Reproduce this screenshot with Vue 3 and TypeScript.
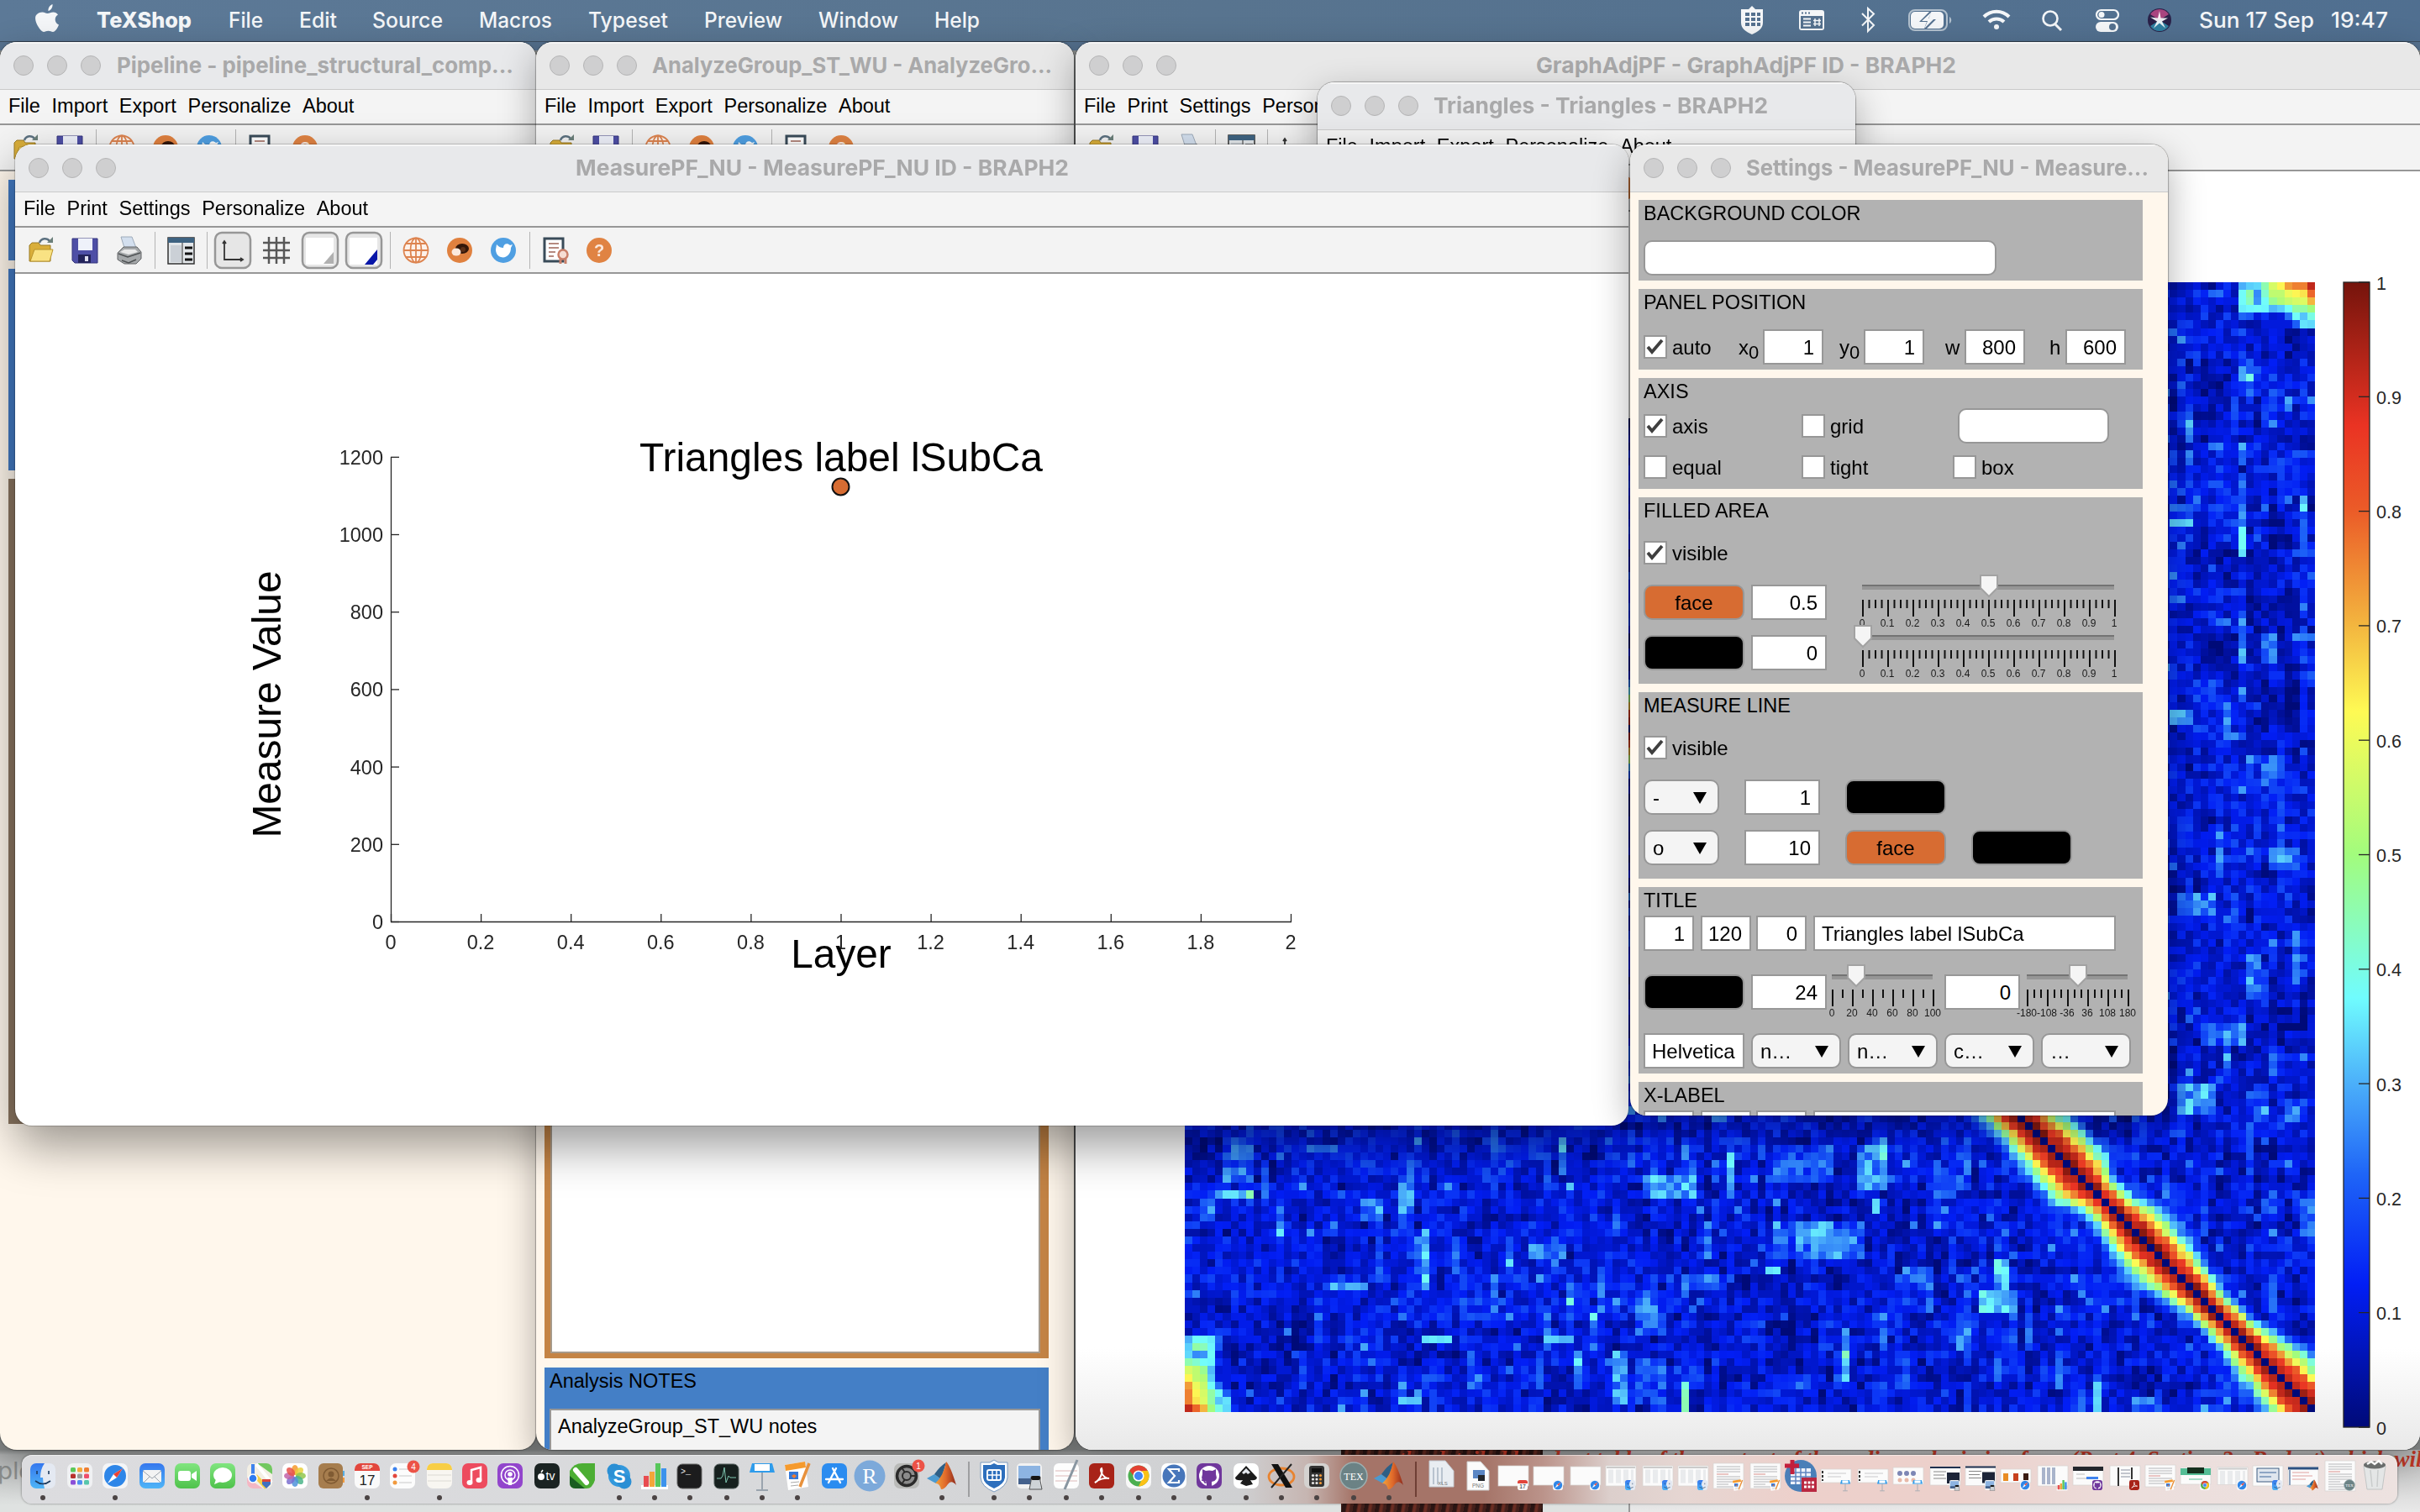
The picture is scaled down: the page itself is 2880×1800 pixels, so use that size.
<script setup lang="ts">
import { onMounted, ref } from 'vue'

interface Txt { t: string; x: number; w: number; bold?: boolean }
interface Item {
  k: 'check' | 'label' | 'field' | 'color' | 'drop' | 'slider'
  w: number
  gap?: number
  v?: string
  sub?: string
  on?: boolean
  left?: boolean
  bg?: string
  pos?: number
  minor?: number
  labels?: string[]
}
interface Row { mt: number; items: Item[] }
interface Panel { title: string; h: number; rows: Row[] }
interface Win {
  id: string; x: number; y: number; w: number; h: number
  title: string; tx: number; tw: number; menus: string[]; tools: string[]
}

const bar: Txt[] = [
  { t: 'TeXShop', x: 115, w: 113, bold: true },
  { t: 'File', x: 272, w: 41 },
  { t: 'Edit', x: 356, w: 45 },
  { t: 'Source', x: 443, w: 84 },
  { t: 'Macros', x: 570, w: 87 },
  { t: 'Typeset', x: 700, w: 95 },
  { t: 'Preview', x: 838, w: 93 },
  { t: 'Window', x: 974, w: 95 },
  { t: 'Help', x: 1112, w: 54 },
  { t: 'Sun 17 Sep', x: 2617, w: 137 },
  { t: '19:47', x: 2774, w: 68 },
]

const ioMenus = ['File', 'Import', 'Export', 'Personalize', 'About']
const plotMenus = ['File', 'Print', 'Settings', 'Personalize', 'About']
const ioTools = ['folder', 'save', '|', 'globe', 'forum', 'bird', '|', 'doc', 'help']
const plotTools = ['folder', 'save', 'print', '|', 'layout', '|', 'axis', 'grid', 'gray', 'blue', '|', 'globe', 'forum', 'bird', '|', 'doc', 'help']

const wins: Win[] = [
  { id: 'pipeline', x: 0, y: 50, w: 638, h: 1676, title: 'Pipeline - pipeline_structural_comp...', tx: 139, tw: 472, menus: ioMenus, tools: ioTools },
  { id: 'analyze', x: 638, y: 50, w: 640, h: 1676, title: 'AnalyzeGroup_ST_WU - AnalyzeGro...', tx: 138, tw: 476, menus: ioMenus, tools: ioTools },
  { id: 'graph', x: 1280, y: 50, w: 1600, h: 1676, title: 'GraphAdjPF - GraphAdjPF ID - BRAPH2', tx: 548, tw: 500, menus: plotMenus, tools: plotTools },
  { id: 'triangles', x: 1568, y: 98, w: 640, h: 400, title: 'Triangles - Triangles - BRAPH2', tx: 138, tw: 398, menus: ioMenus, tools: ioTools },
  { id: 'measure', x: 18, y: 172, w: 1920, h: 1168, title: 'MeasurePF_NU - MeasurePF_NU ID - BRAPH2', tx: 667, tw: 587, menus: plotMenus, tools: plotTools },
  { id: 'settings', x: 1940, y: 172, w: 640, h: 1156, title: 'Settings - MeasurePF_NU - Measure...', tx: 138, tw: 479, menus: [], tools: [] },
]

const ORANGE = '#d76c32'
const unit = ['0', '0.1', '0.2', '0.3', '0.4', '0.5', '0.6', '0.7', '0.8', '0.9', '1']
const panels: Panel[] = [
  { title: 'BACKGROUND COLOR', h: 96, rows: [{ mt: 14, items: [{ k: 'color', w: 420, bg: '#fff' }] }] },
  { title: 'PANEL POSITION', h: 96, rows: [{ mt: 14, items: [
    { k: 'check', w: 113, v: 'auto', on: true },
    { k: 'label', w: 29, v: 'x', sub: '0' }, { k: 'field', w: 72, v: '1' },
    { k: 'label', w: 29, gap: 19, v: 'y', sub: '0' }, { k: 'field', w: 72, v: '1' },
    { k: 'label', w: 23, gap: 25, v: 'w' }, { k: 'field', w: 72, v: '800' },
    { k: 'label', w: 19, gap: 29, v: 'h' }, { k: 'field', w: 72, v: '600' },
  ] }] },
  { title: 'AXIS', h: 132, rows: [
    { mt: 2, items: [{ k: 'check', w: 188, v: 'axis', on: true }, { k: 'check', w: 186, v: 'grid' }, { k: 'color', w: 180, bg: '#fff' }] },
    { mt: 7, items: [{ k: 'check', w: 188, v: 'equal' }, { k: 'check', w: 180, v: 'tight' }, { k: 'check', w: 100, v: 'box' }] },
  ] },
  { title: 'FILLED AREA', h: 222, rows: [
    { mt: 11, items: [{ k: 'check', w: 200, v: 'visible', on: true }] },
    { mt: 17, items: [{ k: 'color', w: 120, bg: ORANGE, v: 'face' }, { k: 'field', w: 90, gap: 8, v: '0.5' }, { k: 'slider', w: 300, gap: 43, pos: 150, minor: 4, labels: unit }] },
    { mt: 18, items: [{ k: 'color', w: 120, bg: '#000' }, { k: 'field', w: 90, gap: 8, v: '0' }, { k: 'slider', w: 300, gap: 43, pos: 0, minor: 4, labels: unit }] },
  ] },
  { title: 'MEASURE LINE', h: 222, rows: [
    { mt: 11, items: [{ k: 'check', w: 200, v: 'visible', on: true }] },
    { mt: 17, items: [{ k: 'drop', w: 90, v: '-' }, { k: 'field', w: 90, gap: 30, v: '1' }, { k: 'color', w: 120, gap: 30, bg: '#000' }] },
    { mt: 18, items: [{ k: 'drop', w: 90, v: 'o' }, { k: 'field', w: 90, gap: 30, v: '10' }, { k: 'color', w: 120, gap: 30, bg: ORANGE, v: 'face' }, { k: 'color', w: 120, gap: 30, bg: '#000' }] },
  ] },
  { title: 'TITLE', h: 222, rows: [
    { mt: 0, items: [{ k: 'field', w: 60, v: '1' }, { k: 'field', w: 60, gap: 8, v: '120' }, { k: 'field', w: 60, gap: 6, v: '0' }, { k: 'field', w: 360, gap: 8, v: 'Triangles label lSubCa', left: true }] },
    { mt: 28, items: [
      { k: 'color', w: 120, bg: '#000' }, { k: 'field', w: 90, gap: 8, v: '24' },
      { k: 'slider', w: 120, gap: 7, pos: 28, minor: 2, labels: ['0', '20', '40', '60', '80', '100'] },
      { k: 'field', w: 90, gap: 13, v: '0' },
      { k: 'slider', w: 120, gap: 9, pos: 60, minor: 3, labels: ['-180', '-108', '-36', '36', '108', '180'] },
    ] },
    { mt: 28, items: [{ k: 'field', w: 120, v: 'Helvetica', left: true }, { k: 'drop', w: 107, gap: 8, v: 'n…' }, { k: 'drop', w: 107, gap: 8, v: 'n…' }, { k: 'drop', w: 107, gap: 8, v: 'c…' }, { k: 'drop', w: 107, gap: 8, v: '…' }] },
  ] },
  { title: 'X-LABEL', h: 222, rows: [
    { mt: 0, items: [{ k: 'field', w: 60 }, { k: 'field', w: 60, gap: 8 }, { k: 'field', w: 60, gap: 6 }, { k: 'field', w: 360, gap: 8 }] },
  ] },
]

function ticks(it: Item): { x: number; big: boolean }[] {
  const n = ((it.labels ?? []).length - 1) * (it.minor ?? 1)
  return Array.from({ length: n + 1 }, (_, i) => ({ x: (i * it.w) / n, big: i % (it.minor ?? 1) === 0 }))
}

const xt = ['0', '0.2', '0.4', '0.6', '0.8', '1', '1.2', '1.4', '1.6', '1.8', '2']
const yt = ['0', '200', '400', '600', '800', '1000', '1200']

/* ---- adjacency matrix ---- */
const N = 148
const canvas = ref<HTMLCanvasElement[] | HTMLCanvasElement | null>(null)
const stops: [number, number[]][] = [
  [0, [0, 10, 120]], [0.125, [2, 30, 245]], [0.22, [30, 100, 247]], [0.3, [75, 175, 250]], [0.375, [112, 252, 254]],
  [0.5, [162, 252, 125]], [0.625, [254, 250, 84]], [0.7, [243, 182, 63]], [0.8, [235, 92, 40]], [0.875, [234, 51, 35]], [1, [117, 20, 12]],
]
function colour(v: number): string {
  const c = Math.max(0, Math.min(1, v))
  for (let i = 1; i < stops.length; i++) {
    if (c <= stops[i][0]) {
      const [a, ca] = stops[i - 1]
      const [b, cb] = stops[i]
      const t = (c - a) / (b - a)
      return `rgb(${ca.map((p, k) => Math.round(p + (cb[k] - p) * t)).join(',')})`
    }
  }
  return 'rgb(117,20,12)'
}
function hash(i: number, j: number, s: number): number {
  let h = Math.imul(i + 1, 374761393) ^ Math.imul(j + 1, 668265263) ^ Math.imul(s + 1, 2147483647 - 5821)
  h = Math.imul(h ^ (h >>> 13), 1274126177)
  h = Math.imul(h ^ (h >>> 15), 2246822519)
  return ((h ^ (h >>> 16)) >>> 0) / 4294967296
}
/* regions with raised correlation: column, row, columns, rows, level */
const patches: number[][] = [
  [5, 112, 4, 6, 0.25], [4, 119, 5, 1, 0.4], [2, 120, 2, 3, 0.28], [16, 113, 4, 1, 0.24], [23, 120, 3, 3, 0.3], [28, 117, 2, 5, 0.3],
  [31, 124, 1, 8, 0.34], [39, 112, 3, 6, 0.2], [45, 126, 5, 2, 0.27], [60, 117, 7, 3, 0.3], [71, 114, 1, 6, 0.4],
  [68, 123, 1, 5, 0.3], [77, 113, 8, 5, 0.24], [88, 113, 3, 6, 0.32], [91, 112, 1, 7, 0.35], [77, 123, 12, 5, 0.27],
  [82, 123, 3, 4, 0.33], [106, 128, 2, 5, 0.36], [104, 132, 5, 3, 0.33], [59, 132, 4, 6, 0.25], [65, 130, 5, 2, 0.3],
  [31, 138, 4, 1, 0.36], [47, 138, 4, 1, 0.32], [56, 140, 2, 7, 0.32], [59, 141, 4, 6, 0.22], [65, 144, 1, 4, 0.43],
  [86, 137, 1, 7, 0.37], [119, 144, 1, 4, 0.33], [124, 146, 3, 2, 0.27], [18, 131, 6, 1, 0.29], [28, 146, 3, 1, 0.33],
  [76, 129, 2, 1, 0.36], [94, 129, 4, 2, 0.25], [99, 112, 4, 7, 0.22], [49, 112, 1, 5, 0.3], [65, 112, 2, 5, 0.23],
  [90, 120, 1, 2, 0.35], [130, 105, 5, 4, 0.33], [144, 107, 3, 3, 0.26], [138, 119, 6, 3, 0.17], [145, 119, 3, 3, 0.22],
  [128, 6, 2, 1, 0.22], [130, 8, 3, 5, 0.15], [138, 11, 1, 2, 0.28], [139, 11, 2, 1, 0.2], [131, 18, 1, 1, 0.33], [131, 19, 1, 2, 0.24],
  [134, 21, 2, 1, 0.24], [138, 21, 1, 1, 0.3], [138, 22, 1, 2, 0.22], [131, 22, 1, 2, 0.25], [138, 30, 1, 1, 0.31], [138, 32, 1, 4, 0.37],
  [146, 28, 1, 2, 0.29], [146, 29, 1, 1, 0.35], [129, 31, 3, 1, 0.33], [129, 29, 3, 1, 0.23], [145, 35, 2, 1, 0.2], [129, 38, 1, 1, 0.25],
  [129, 41, 2, 1, 0.24], [135, 44, 2, 1, 0.24], [138, 43, 1, 7, 0.28], [141, 46, 2, 4, 0.24], [144, 15, 1, 2, 0.28], [147, 15, 1, 1, 0.29],
  [145, 22, 3, 1, 0.19], [134, 1, 2, 1, 0.24], [129, 56, 3, 2, 0.34], [139, 62, 4, 4, 0.24], [135, 71, 1, 7, 0.28], [142, 74, 4, 3, 0.26],
  [130, 80, 5, 3, 0.27], [139, 88, 2, 6, 0.3], [145, 84, 2, 8, 0.24], [133, 97, 6, 3, 0.26],
]
const corner: number[][] = [
  [0.3, 0.33, 0.34, 0.45, 0.57, 0.63, 0.73, 0.76, 0.76, 0.92],
  [0.38, 0.46, 0.26, 0.42, 0.54, 0.54, 0.6, 0.63, 0.65, 0.79],
  [0.38, 0.44, 0.27, 0.38, 0.48, 0.52, 0.55, 0.57, 0.58, 0.7],
  [0.36, 0.37, 0.38, 0.37, 0.31, 0.33, 0.38, 0.46, 0.46, 0.5],
  [0.22, 0.2, 0.1, 0.15, 0.09, 0.1, 0.23, 0.38, 0.32, 0.4],
  [0.06, 0.04, 0.05, 0.1, 0.1, 0.1, 0.1, 0.21, 0.35, 0.34],
]
/* reach of the diagonal band at a given position along it */
const spread: [number, number][] = [[100, 5], [107, 5], [110, 5], [113, 6], [117, 5.6], [119, 3.6], [121, 4], [124, 5.6], [128, 5.6], [131, 4.4], [134, 3.3], [138, 3.8], [141, 5], [144, 6.2], [147, 6.6]]
function width(k: number): number {
  if (k <= 100) return 5
  for (let i = 1; i < spread.length; i++) {
    if (k <= spread[i][0]) {
      const [a, va] = spread[i - 1]
      const [b, vb] = spread[i]
      return va + ((vb - va) * (k - a)) / (b - a)
    }
  }
  return 6.6
}
function cell(r: number, c: number): number {
  if (r === c) return 0
  const fine = hash(r, c, 1)
  const vert = hash(Math.floor(r / 5), c, 2)
  const horz = hash(r, Math.floor(c / 4), 3)
  const blk = hash(Math.floor((r + 2) / 6), Math.floor((c + 1) / 7), 4)
  let v = -0.055 + 0.12 * fine + 0.075 * vert + 0.05 * horz + 0.06 * blk
  if (vert > 0.95) v += 0.07
  if (fine > 0.98) v += 0.09
  for (const [pc, pr, pw, ph, lv] of patches) {
    if (c >= pc && c < pc + pw && r >= pr && r < pr + ph) {
      const many = pw * ph > 4
      v = Math.max(v, lv + (fine - (many ? 0.75 : 0.6)) * (many ? 0.17 : 0.05) + (many ? (vert - 0.5) * 0.08 : 0))
    }
  }
  if (c >= 138 && r < 6) return corner[r][c - 138]
  if (r >= 138 && c < 6) return corner[c][r - 138]
  const d = Math.abs(r - c)
  if (d < 10) {
    const s = width((r + c) / 2) * (0.92 + 0.16 * blk)
    const near = 0.97 * Math.exp(-Math.pow(d / s, 2.2)) + (fine - 0.5) * 0.09
    v = Math.max(v, near)
  }
  return v
}
onMounted(() => {
  const el = Array.isArray(canvas.value) ? canvas.value[0] : canvas.value
  const g = el?.getContext('2d')
  if (!g) return
  for (let r = 0; r < N; r++) {
    for (let c = 0; c < N; c++) {
      g.fillStyle = colour(cell(r, c))
      g.fillRect(c, r, 1, 1)
    }
  }
})
const cb = ['1', '0.9', '0.8', '0.7', '0.6', '0.5', '0.4', '0.3', '0.2', '0.1', '0']
const cbStops = stops.map(([o, c]) => ({ o: 1 - o, c: `rgb(${c.join(',')})` })).reverse()

/* ---- dock ---- */
const running = [51, 137, 437, 523, 737, 779, 821, 865, 907, 949, 1121, 1183, 1225, 1269, 1311, 1355, 1397, 1439, 1483, 1525, 1567, 1611, 1653]
interface Thumb { x: number; b: string; k: string; h?: number }
const thumbs: Thumb[] = [
  { x: 1801, b: 'cal', k: 'blank', h: 24 }, { x: 1843, b: 'safari', k: 'blank', h: 22 }, { x: 1887, b: 'safari', k: 'blank', h: 22 },
  { x: 1929, b: 'finder', k: 'list', h: 24 }, { x: 1973, b: 'finder', k: 'list', h: 24 }, { x: 2015, b: 'finder', k: 'list', h: 24 },
  { x: 2057, b: 'pages', k: 'text', h: 30 }, { x: 2101, b: 'pages', k: 'text', h: 30 },
  { x: 2185, b: 'key', k: 'slide', h: 16 }, { x: 2229, b: 'key', k: 'slide', h: 16 }, { x: 2271, b: 'key', k: 'dots', h: 20 },
  { x: 2315, b: 'prev', k: 'brain', h: 22 }, { x: 2357, b: 'prev', k: 'brain', h: 23 }, { x: 2399, b: 'safari', k: 'warm', h: 16 },
  { x: 2443, b: 'num', k: 'sheet', h: 24 }, { x: 2485, b: 'git', k: 'dark', h: 22 }, { x: 2529, b: 'pdf', k: 'cols', h: 24 },
  { x: 2571, b: 'pages', k: 'text', h: 26 }, { x: 2613, b: 'chrome', k: 'green', h: 20 }, { x: 2657, b: 'safari', k: 'list', h: 21 },
  { x: 2699, b: 'finder', k: 'shot', h: 24 }, { x: 2741, b: 'mat', k: 'code', h: 22 }, { x: 2785, b: 'tex', k: 'text', h: 36 },
]
</script>

<template>
  <div class="desk">
    <div class="wall">
      <span class="ghost">rple</span>
      <div class="sheet"></div>
      <div class="photo"></div>
      <span class="redtext">the detailed handout table of the content of the coding submission from (Part 4, Section 2 - Budget) which will</span>
    </div>

    <svg class="menubar" width="2880" height="49">
      <g fill="#f4f6f8">
        <path d="M64 12.500c-.5-3.500 2-7 5-8 .5 3.500-2 7.500-5 8zM57 14c2.500 0 3.800 1.500 6 1.500S67 14 70 14c2.200 0 4.200 1.100 5.500 3-5 3-4 10 1 12-1.500 4-4.300 8.500-7 8.500-2 0-3-1.200-5.500-1.200S60.500 37.500 58.500 37.500C54.500 37.500 45 22 50 17c1.700-2 4-3 7-3z" transform="translate(-6.500 .5)" />
        <text v-for="b in bar" :key="b.t" :x="b.x" y="33" :textLength="b.w" lengthAdjust="spacingAndGlyphs" :class="['bt', { bold: b.bold }]">{{ b.t }}</text>
        <path d="M2085 7l4 4h9v16c0 7-6 11-13 14-7-3-13-7-13-14V11h9z" />
        <rect x="2141" y="12" width="30" height="24" rx="3" />
        <rect x="2495" y="12" width="26" height="11" rx="5.500" fill="none" stroke="#f4f6f8" stroke-width="2.200" />
        <circle cx="2501" cy="17.500" r="3.500" />
        <path d="M2500 26h15a6 6 0 010 12h-15a6 6 0 010-12z" />
        <rect x="2274" y="14" width="39" height="20" rx="5" />
        <path d="M2320 20c3 2 3 6 0 8z" opacity=".6" />
        <circle cx="2376" cy="32" r="3" />
      </g>
      <g fill="#55718f">
        <rect x="2077" y="15" width="5" height="4" /><rect x="2084" y="15" width="5" height="4" /><rect x="2091" y="15" width="4" height="4" />
        <rect x="2077" y="21" width="5" height="4" /><rect x="2084" y="21" width="5" height="4" /><rect x="2091" y="21" width="4" height="4" />
        <rect x="2077" y="27" width="5" height="4" /><rect x="2084" y="27" width="5" height="4" /><rect x="2091" y="27" width="4" height="4" />
        <rect x="2143" y="19" width="26" height="15" />
        <circle cx="2514" cy="32" r="4" />
        <path d="M2300 10l-16 16h9l-5 13 16-16h-9z" />
        <rect x="2144" y="14.500" width="2" height="2" /><rect x="2148" y="14.500" width="2" height="2" /><rect x="2152" y="14.500" width="2" height="2" />
      </g>
      <g stroke="#f4f6f8" fill="none">
        <path d="M2146 22.500h9M2146 26.500h9M2146 30.500h9" stroke-width="2" />
        <path d="M2160 22v9M2165 22v9M2158 24.500h9M2158 28.500h9" stroke-width="1.500" />
        <path d="M2216 16l14 14-7 7V10l7 6.500-14 14" stroke-width="2" />
        <rect x="2272" y="12" width="45" height="24" rx="7" stroke-width="2" opacity=".6" />
        <path d="M2299 14l-12 11h7l-4 9 12-12h-7z" stroke="none" fill="#f4f6f8" />
        <path d="M2361 20a21 21 0 0130 0M2367 26a13 13 0 0118 0" stroke-width="4" />
        <circle cx="2440" cy="22" r="8.500" stroke-width="2.600" />
        <path d="M2446 29l7 7" stroke-width="3" />
      </g>
      <circle cx="2570" cy="24" r="14" fill="#2a2148" />
      <path d="M2559 17a13 13 0 0122 0l-11 7z" fill="#a9457f" />
      <path d="M2559 31a13 13 0 0022 0l-11-7z" fill="#2f7fa0" />
      <path d="M2570 13l1.500 8.500 8.500 0-7 4 4 8-7-6-7 6 4-8-8-5 9 1z" fill="#fff" opacity=".9" />
    </svg>

    <section v-for="w in wins" :key="w.id" :class="['win', w.id]" :style="{ left: w.x + 'px', top: w.y + 'px', width: w.w + 'px', height: w.h + 'px' }">
      <svg class="titlebar" :width="w.w" height="56">
        <circle v-for="i in 3" :key="i" :cx="i * 40 - 12" cy="28" r="11.500" fill="#cfcfd0" stroke="#b4b4b5" />
        <text :x="w.tx" y="36.500" :textLength="w.tw" lengthAdjust="spacingAndGlyphs">{{ w.title }}</text>
      </svg>
      <nav v-if="w.menus.length" class="menus"><span v-for="m in w.menus" :key="m">{{ m }}</span></nav>
      <div v-if="w.tools.length" class="tools">
        <template v-for="(t, i) in w.tools" :key="i">
          <i v-if="t === '|'" class="sep"></i>
          <svg v-else viewBox="-26 -26 52 52" width="52" height="52">
            <rect v-if="w.id === 'measure' && ['axis', 'gray', 'blue'].includes(t)" x="-21" y="-21" width="42" height="42" rx="8" fill="#e6e6e6" stroke="#979797" stroke-width="2.500" />
            <g v-if="t === 'folder'">
              <path d="M-14-6l3-3h8l2 3h12v19h-25z" fill="#d9ae3a" stroke="#9a7a25" />
              <path d="M-13 13l5-14h22l-4 14z" fill="#f9e283" stroke="#b8932c" />
              <path d="M-2-9c2-6 9-6 12-2" fill="none" stroke="#5c7180" stroke-width="2.500" /><path d="M7-9h7v-7z" fill="#6b7f7a" />
            </g>
            <g v-else-if="t === 'save'">
              <path d="M-15-14h30v29h-27l-3-3z" fill="#4e4fa6" stroke="#35357c" /><rect x="-8" y="-14" width="17" height="14" fill="#eef1fa" />
              <rect x="-8" y="5" width="15" height="10" fill="#23235a" /><rect x="0" y="7" width="4" height="6" fill="#dde" />
            </g>
            <g v-else-if="t === 'print'">
              <path d="M-9-16h13l5 13h-14z" fill="#d3dfee" stroke="#9eabba" /><path d="M-13 3l7-7h16l5 6v8l-6 6h-14l-8-5z" fill="#a5a8aa" stroke="#626567" />
              <path d="M-12 4l11 4 15-5M-8 12l8 3 9-4" stroke="#4f5254" fill="none" stroke-width="1.500" /><path d="M-5-1h13l3 3-11 3-10-3z" fill="#e8e8e8" />
            </g>
            <g v-else-if="t === 'layout'">
              <rect x="-15" y="-15" width="31" height="31" fill="#e3e7ea" stroke="#333" stroke-width="1.500" /><rect x="-15" y="-15" width="31" height="6" fill="#3e6381" />
              <rect x="-12" y="-6" width="13" height="20" fill="#cbd0d6" /><path d="M5-3h9M5 4h9M5 11h9" stroke="#111" stroke-width="3" /><path d="M2-9v25" stroke="#333" />
            </g>
            <g v-else-if="t === 'axis'" fill="none" stroke="#333"><path d="M-10-10v21h21M-12-8l2-3 2 3M9 9l3 2-3 2" stroke-width="1.800" /></g>
            <g v-else-if="t === 'grid'" fill="none" stroke="#585858"><path d="M-9-16v32M0-16v32M9-16v32M-16-9h32M-16 0h32M-16 9h32" stroke-width="2.500" /></g>
            <g v-else-if="t === 'gray'"><rect x="-17" y="-15" width="33" height="32" fill="#fff" /><path d="M16 2v14H4z" fill="#b0b0b0" /></g>
            <g v-else-if="t === 'blue'"><rect x="-17" y="-15" width="33" height="32" fill="#fff" /><path d="M16-1v12l-5 6H1z" fill="#0716a8" /></g>
            <g v-else-if="t === 'globe'" fill="none" stroke="#dd8450" stroke-width="1.800">
              <circle r="14.500" fill="#fdf1e9" /><ellipse rx="6.500" ry="14.500" /><path d="M0-15v30M-15 0h30M-12-8h24M-12 8h24" />
            </g>
            <g v-else-if="t === 'forum'"><circle r="15" fill="#e0813f" /><ellipse cx="3" cy="-2" rx="8" ry="6" fill="#33170a" /><ellipse cx="-4" cy="2" rx="5.500" ry="4.500" fill="#fbe9dd" /><circle cx="4" cy="-1" r="3" fill="#5c3018" /></g>
            <g v-else-if="t === 'bird'"><circle r="15" fill="#4f9fe2" /><path d="M-8-7c3 3 5 4 8 4 0-5 5-6 8-3l3-1-2 4c0 8-6 13-12 11-4-1-6-5-6-9z" fill="#fff" /></g>
            <g v-else-if="t === 'doc'">
              <rect x="-13" y="-14" width="22" height="27" fill="#fff" stroke="#394b59" stroke-width="3" /><path d="M-8-8h12M-8-3h12M-8 2h8M-8 7h6" stroke="#b58a80" stroke-width="2" />
              <circle cx="9" cy="5" r="5.500" fill="#f6ddd3" stroke="#c97f69" stroke-width="2.500" /><path d="M6 10v6M12 10v6" stroke="#c97f69" stroke-width="3" />
            </g>
            <g v-else-if="t === 'help'"><circle r="15" fill="#e08343" /><text y="7" text-anchor="middle" font-size="20" font-weight="bold" fill="#fbe8dc">?</text></g>
          </svg>
        </template>
      </div>

      <div v-if="w.id === 'pipeline'" class="pipebody"><div class="b1"></div><div class="b2"></div><div class="b3"></div></div>

      <div v-else-if="w.id === 'analyze'" class="anabody">
        <div class="orangebox"><div></div></div>
        <div class="notes"><p>Analysis NOTES</p><div>AnalyzeGroup_ST_WU notes</div></div>
      </div>

      <div v-else-if="w.id === 'graph'" class="graphbody">
        <canvas ref="canvas" width="148" height="148"></canvas>
        <svg class="cbar" width="100" height="1400" viewBox="0 -10 100 1400">
          <defs><linearGradient id="jet" x1="0" y1="0" x2="0" y2="1"><stop v-for="s in cbStops" :key="s.o" :offset="s.o" :stop-color="s.c" /></linearGradient></defs>
          <rect x="1" y="0" width="31" height="1363" fill="url(#jet)" stroke="#262626" stroke-width="1.300" />
          <g v-for="(l, i) in cb" :key="l">
            <path :d="`M19 ${i * 136.3}h13`" stroke="#262626" stroke-width="1.300" />
            <text x="40" :y="i * 136.3 + 8.500" font-size="21.500" fill="#262626">{{ l }}</text>
          </g>
        </svg>
      </div>

      <svg v-else-if="w.id === 'measure'" class="plot" width="1920" height="1014" viewBox="18 326 1920 1014">
        <path d="M465.500 544V1097.500H1537" fill="none" stroke="#262626" stroke-width="1.300" />
        <g v-for="(l, i) in yt" :key="'y' + l">
          <path :d="`M465 ${1097.5 - i * 92.2}h10`" stroke="#262626" stroke-width="1.300" />
          <text x="456" :y="1106 - i * 92.200" text-anchor="end" class="tick">{{ l }}</text>
        </g>
        <g v-for="(l, i) in xt" :key="'x' + l">
          <path :d="`M${465.5 + i * 107.1} 1097v-9`" stroke="#262626" stroke-width="1.300" />
          <text :x="465 + i * 107.100" y="1130" text-anchor="middle" class="tick">{{ l }}</text>
        </g>
        <text x="1001" y="561" text-anchor="middle" textLength="480" lengthAdjust="spacingAndGlyphs" class="big">Triangles label lSubCa</text>
        <text x="1001" y="1151.500" text-anchor="middle" class="big">Layer</text>
        <text transform="translate(334 838.500) rotate(-90)" text-anchor="middle" class="big">Measure Value</text>
        <circle cx="1000.500" cy="579.500" r="10" fill="#d76c32" stroke="#111" stroke-width="2" />
      </svg>

      <div v-else-if="w.id === 'settings'" class="panels">
        <div v-for="p in panels" :key="p.title" class="panel" :style="{ height: p.h + 'px' }">
          <h4>{{ p.title }}</h4>
          <div v-for="(r, ri) in p.rows" :key="ri" class="row" :style="{ marginTop: r.mt + 'px' }">
            <div v-for="(it, ii) in r.items" :key="ii" :class="['it', it.k, { left: it.left }]" :style="{ width: it.w + 'px', marginLeft: (it.gap ?? 0) + 'px', background: it.bg }">
              <template v-if="it.k === 'check'">
                <svg width="28" height="28" viewBox="0 0 28 28"><rect x="1" y="1" width="26" height="26" fill="#fff" stroke="#979797" stroke-width="2" /><path v-if="it.on" d="M5 14l5 6L22 6" fill="none" stroke="#3f3f3f" stroke-width="3.800" /></svg>
                <span>{{ it.v }}</span>
              </template>
              <template v-else-if="it.k === 'slider'">
                <svg :width="it.w" height="42">
                  <rect x="-1" y="0" :width="it.w" height="6" fill="#969696" /><rect x="-1" y="0" :width="it.w" height="2" fill="#737373" />
                  <path v-for="t in ticks(it)" :key="t.x" :d="`M${t.x} 18v${t.big ? 20 : 10}`" stroke="#111" stroke-width="2" />
                  <text v-for="(l, li) in it.labels" :key="l" :x="(li * it.w) / ((it.labels ?? []).length - 1) - 1" y="50" text-anchor="middle" font-size="12" fill="#1a1a1a">{{ l }}</text>
                  <path :d="`M${(it.pos ?? 0) - 10} -11h20v15l-10 10l-10 -10z`" fill="#f5f5f5" stroke="#a2a2a2" stroke-width="2" />
                </svg>
              </template>
              <template v-else-if="it.k === 'drop'"><span>{{ it.v }}</span><i class="tri"></i></template>
              <template v-else>{{ it.v }}<sub v-if="it.sub">{{ it.sub }}</sub></template>
            </div>
          </div>
        </div>
      </div>
    </section>

    <div class="dock">
      <svg width="2827" height="58" viewBox="26 1732 2827 58">
        <defs>
          <linearGradient id="bl" x1="0" y1="0" x2="0" y2="1"><stop offset="0" stop-color="#3577ee" /><stop offset="1" stop-color="#4fb5f7" /></linearGradient>
          <linearGradient id="gr" x1="0" y1="0" x2="0" y2="1"><stop offset="0" stop-color="#80e57f" /><stop offset="1" stop-color="#4fc24b" /></linearGradient>
          <linearGradient id="mt" x1="0" y1="0" x2="1" y2="0"><stop offset="0" stop-color="#f3a33b" /><stop offset=".5" stop-color="#e0692a" /><stop offset="1" stop-color="#8e2a1c" /></linearGradient>
          <g id="i-finder"><rect x="-15" y="-15" width="30" height="30" rx="7" fill="#e4e9f2" /><path d="M2-15H-8a7 7 0 00-7 7V8a7 7 0 007 7H2Q0 8 0 2h-3Q-3-8 2-15z" fill="url(#bl)" /><path d="M-7-6v4M7-6v4M-9 6q9 7 18 0" stroke="#1c3a5e" stroke-width="1.600" fill="none" /></g>
          <g id="i-safari"><rect x="-15" y="-15" width="30" height="30" rx="7" fill="#f4f5f7" /><circle r="13" fill="#2e86e8" /><path d="M9-9L2 2-9 9-2-2z" fill="#fff" /><path d="M9-9L2 2-2-2z" fill="#ea4335" /></g>
          <g id="i-key"><path d="M-12-15h24l3 11h-30z" fill="#2f9ceb" /><rect x="-9" y="-14" width="18" height="8" fill="#fff" /><path d="M0-4v20M-7 17h14" stroke="#9aa4ae" stroke-width="2" /></g>
          <g id="i-pages"><path d="M-15-13l24-4 4 30-24 4z" fill="#fff" /><path d="M-15-13l24-4 1 7-24 4z" fill="#f59a2d" /><rect x="-10" y="-5" width="11" height="9" fill="#3478d8" /><path d="M-4-2l3 2-3 3-3-3z" fill="#f37b2c" /><path d="M-8 8l10-1M-8 12l9-1" stroke="#aaa" /><path d="M14-15L3 13" stroke="#e8913c" stroke-width="3.500" /></g>
          <g id="i-num"><rect x="-16" y="11" width="32" height="5" fill="#fff" /><rect x="-13" y="0" width="6" height="13" fill="#e84c4f" /><rect x="-6" y="-5" width="6" height="18" fill="#f4a63a" /><rect x="1" y="-15" width="6" height="28" fill="#57c75a" /><rect x="8" y="-9" width="6" height="22" fill="#3c93ec" /></g>
          <g id="i-git"><rect x="-15" y="-15" width="30" height="30" rx="7" fill="#70379c" /><circle r="12" fill="#fff" /><path d="M-8-8l4 2q4-1 8 0l4-2v6q3 8-5 9v5h-6v-5q-8-1-5-9z" fill="#70379c" /><path d="M-9 5q3 0 4 3h3" stroke="#70379c" fill="none" stroke-width="1.500" /></g>
          <g id="i-pdf"><rect x="-15" y="-15" width="30" height="30" rx="6" fill="#a82318" /><path d="M-8 8C-2 5 2-4 0-9c-3 1 1 12 9 12C4 2-4 4-8 8z" fill="none" stroke="#fff" stroke-width="2" /></g>
          <g id="i-chrome"><rect x="-15" y="-15" width="30" height="30" rx="7" fill="#f7f7f7" /><circle r="12.500" fill="#4caf50" /><path d="M-10.800-6.200A12.500 12.500 0 0110.800-6.200L0-5z" fill="#e34133" /><path d="M10.800-6.200A12.500 12.500 0 010 12.500L5 2 4-6z" fill="#fbc116" /><path d="M-10.800-6.200l6.500 8 3-8z" fill="#e34133" /><circle r="5.800" fill="#4285f4" stroke="#fff" stroke-width="1.500" /></g>
          <g id="i-mat"><path d="M-18 3l9-5 8 6-6 5z" fill="#4b9ad0" /><path d="M-9-2Q-2-12 5-16L-1 4z" fill="#2d5f86" /><path d="M5-17Q10-12 17 11 11 4 7 10 3 16-1 16-3 8-8 9 2 0 5-17z" fill="url(#mt)" /></g>
          <g id="i-prev"><rect x="-15" y="-15" width="30" height="30" rx="5" fill="#f2f2f2" /><rect x="-13" y="-12" width="26" height="22" fill="#8db4e2" /><path d="M-13 3h26v7h-26z" fill="#44618c" /><path d="M2 1h11v5l2 10H0l2-10z" fill="#ced3d7" stroke="#555" /><rect x="2" y="0" width="11" height="5" rx="2" fill="#151515" /></g>
          <g id="i-tex"><circle r="16" fill="#6b8285" stroke="#9db0b1" stroke-width="1.500" /><text y="5" text-anchor="middle" class="tex">TEX</text></g>
          <g id="i-cal"><rect x="-15" y="-15" width="30" height="30" rx="7" fill="#fafafa" /><path d="M-15-5v-3a7 7 0 017-7H8a7 7 0 017 7v3z" fill="#e2453c" /><text y="11" text-anchor="middle" font-size="17" fill="#222">17</text></g>
        </defs>

        <use href="#i-finder" x="51" y="1757" />
        <g transform="translate(95 1757)"><rect x="-15" y="-15" width="30" height="30" rx="7" fill="#f0f1f3" /><g v-for="(c, i) in ['#5cc85a', '#f5a93c', '#ef7f33', '#b8312d', '#9b9b9b', '#ef4f6b', '#8b4fd8', '#4f8ff0', '#56c6ac']" :key="i"><rect :x="-11 + (i % 3) * 8" :y="-10 + Math.floor(i / 3) * 7.500" width="6" height="5.500" rx="1.500" :fill="c" /></g></g>
        <use href="#i-safari" x="137" y="1757" />
        <g transform="translate(181 1757)"><rect x="-15" y="-15" width="30" height="30" rx="7" fill="url(#bl)" /><rect x="-11" y="-7" width="22" height="15" rx="2" fill="#f3f3f3" /><path d="M-11-6L0 3 11-6M-10 8l7-7M10 8L3 1" fill="none" stroke="#9aa3ad" /></g>
        <g transform="translate(223 1757)"><rect x="-15" y="-15" width="30" height="30" rx="7" fill="url(#gr)" /><rect x="-11" y="-6" width="15" height="12" rx="3" fill="#fff" /><path d="M5-2l6-4V6L5 2z" fill="#fff" /></g>
        <g transform="translate(265 1757)"><rect x="-15" y="-15" width="30" height="30" rx="7" fill="url(#gr)" /><ellipse cy="-1" rx="11" ry="9" fill="#fff" /><path d="M-8 4l-2 6 7-3z" fill="#fff" /></g>
        <g transform="translate(309 1757)"><rect x="-15" y="-15" width="30" height="30" rx="7" fill="#f3efe4" /><path d="M-3-15H8a7 7 0 017 7v6z" fill="#72c860" /><path d="M-4-14L14 8" stroke="#fff" stroke-width="4" /><path d="M-15 2L4 15h-12a7 7 0 01-7-7z" fill="#f3b7c4" /><path d="M-5 0L8 14" stroke="#f4cf4a" stroke-width="5" /><path d="M-8-14V3" stroke="#3f83ee" stroke-width="4" /><circle cx="-8" cy="3" r="5" fill="#2e7bf0" stroke="#fff" stroke-width="1.500" /><path d="M3 5h10v5l-5 5-5-5z" fill="#3f70c0" /><path d="M3 4h10v3H3z" fill="#d8463d" /></g>
        <g transform="translate(351 1757)"><rect x="-15" y="-15" width="30" height="30" rx="7" fill="#fff" /><ellipse v-for="(c, i) in ['#f59a2c', '#e9d13c', '#92c74c', '#4bb58a', '#4f93da', '#7b6fd0', '#c263a8', '#e8524a']" :key="c" cy="-7" rx="4" ry="6" :fill="c" opacity=".85" :transform="`rotate(${i * 45})`" /></g>
        <g transform="translate(394 1757)"><rect x="12" y="-6" width="4" height="6" fill="#55aee5" /><rect x="12" y="2" width="4" height="6" fill="#f19a3e" /><rect x="-15" y="-15" width="29" height="30" rx="6" fill="#a67d4e" /><circle r="9" fill="none" stroke="#805b33" stroke-width="1.500" /><circle cy="-2" r="3.500" fill="#805b33" /><path d="M-6 6q6-7 12 0z" fill="#805b33" /></g>
        <g transform="translate(437 1757)"><rect x="-15" y="-15" width="30" height="30" rx="7" fill="#fafafa" /><path d="M-15-6v-2a7 7 0 017-7H8a7 7 0 017 7v2z" fill="#e2463d" /><text y="-8" text-anchor="middle" font-size="6.500" font-weight="bold" fill="#fff">SEP</text><text y="11" text-anchor="middle" font-size="17" fill="#222">17</text></g>
        <g transform="translate(479 1757)"><rect x="-15" y="-15" width="30" height="30" rx="7" fill="#fcfcfc" /><path d="M-4-8h15M-4 0h15M-4 8h15" stroke="#c9c9c9" /><circle cx="-9" cy="-8" r="2.500" fill="#3c82ee" /><circle cx="-9" r="2.500" fill="#e2463d" /><circle cx="-9" cy="8" r="2.500" fill="#f19a3e" /><circle cx="13" cy="-11" r="7.500" fill="#ec5347" /><text x="13" y="-7.500" text-anchor="middle" font-size="10" fill="#fff">4</text></g>
        <g transform="translate(523 1757)"><rect x="-15" y="-15" width="30" height="30" rx="7" fill="#f8f6f1" /><path d="M-15-7v-1a7 7 0 017-7H8a7 7 0 017 7v1z" fill="#f8ce45" /><path d="M-14-1h28M-14 6h28" stroke="#dcdad4" /></g>
        <g transform="translate(565 1757)"><rect x="-15" y="-15" width="30" height="30" rx="7" fill="#ed4b5e" /><path d="M-4 7V-7L7-10V4" fill="none" stroke="#fff" stroke-width="2.500" /><ellipse cx="-6" cy="8" rx="3.500" ry="3" fill="#fff" /><ellipse cx="5" cy="5" rx="3.500" ry="3" fill="#fff" /></g>
        <g transform="translate(607 1757)"><rect x="-15" y="-15" width="30" height="30" rx="7" fill="#9245cc" /><circle cy="-1" r="10.500" fill="none" stroke="#fff" stroke-width="1.500" /><circle cy="-1" r="6" fill="none" stroke="#fff" stroke-width="1.500" /><circle cy="-2" r="2.800" fill="#fff" /><path d="M-3 2h6l-1 9h-4z" fill="#fff" /></g>
        <g transform="translate(651 1757)"><rect x="-15" y="-15" width="30" height="30" rx="7" fill="#1a2322" /><circle cx="-7" cy="1" r="4" fill="#fff" /><path d="M-7-4l2-3" stroke="#fff" stroke-width="1.500" /><text x="4" y="5" text-anchor="middle" font-size="14" fill="#fff">tv</text></g>
        <g transform="translate(693 1757)"><path d="M-15-6q5-9 15-9h15V5q-3 10-10 10h-13q-7 0-7-7z" fill="#4cae34" /><path d="M-15 0L3 15h-11q-7 0-7-7z" fill="#195d20" /><path d="M-8-7L5 8" stroke="#fff" stroke-width="6" stroke-linecap="round" /></g>
        <g transform="translate(737 1757)"><circle r="13" fill="#3398dc" /><circle cx="-6" cy="-6" r="8.500" fill="#2b8fd4" /><circle cx="6" cy="7" r="8.500" fill="#2b8fd4" /><text y="8" text-anchor="middle" font-size="22" font-weight="bold" fill="#fff">S</text></g>
        <use href="#i-num" x="779" y="1757" />
        <g transform="translate(821 1757)"><rect x="-15" y="-14" width="29" height="29" rx="6" fill="#1c1c1d" stroke="#676767" /><text x="-11" y="-2" font-size="10" fill="#eee" class="mono">&gt;_</text></g>
        <g transform="translate(865 1757)"><rect x="-15" y="-14" width="29" height="29" rx="6" fill="#16201e" stroke="#4e5a58" /><path d="M-12 3h5l2-3 2-10 2 18 3-8 2 2h7" fill="none" stroke="#7ec6b0" /></g>
        <use href="#i-key" x="907" y="1757" />
        <use href="#i-pages" x="949" y="1757" />
        <g transform="translate(993 1757)"><rect x="-15" y="-15" width="30" height="30" rx="7" fill="#2b8cf0" /><path d="M2-9L-7 8M-2-9L7 8M-10 4H10" stroke="#fff" stroke-width="2.300" stroke-linecap="round" /></g>
        <g transform="translate(1035 1757)"><circle r="18.500" fill="#7ca9da" /><text y="9" text-anchor="middle" font-size="26" fill="#fff" class="serif">R</text></g>
        <g transform="translate(1079 1757)"><rect x="-15" y="-15" width="30" height="30" rx="7" fill="#b9bab8" /><circle r="11.500" fill="#8b8b8b" stroke="#2b2b2b" stroke-width="3.500" /><circle r="5" fill="none" stroke="#2b2b2b" stroke-width="2" /><path d="M5 0h6M-2-4l-4-6M-2 4l-4 6" stroke="#2b2b2b" stroke-width="2" /><circle cx="14" cy="-12" r="7.500" fill="#ec5347" /><text x="14" y="-8" text-anchor="middle" font-size="10" fill="#fff">1</text></g>
        <use href="#i-mat" x="1121" y="1757" />
        <path d="M1153 1740v42" stroke="#8d8d8f" stroke-width="1.500" />
        <g transform="translate(1183 1757)"><path d="M0-19l5 3h11V2Q15 13 0 19-15 13-16 2v-18h11z" fill="#fff" stroke="#7a9abf" /><path d="M0-15l4 2h9V2Q12 10 0 15-12 10-13 2v-15h9z" fill="#2d6fbd" /><rect x="-8" y="-7" width="16" height="12" rx="2" fill="none" stroke="#fff" stroke-width="2" /><path d="M-8-1H8M-2-7V5M3-7V5" stroke="#fff" stroke-width="1.500" /></g>
        <use href="#i-prev" x="1225" y="1757" />
        <g transform="translate(1269 1757)"><rect x="-15" y="-15" width="30" height="30" rx="6" fill="#fdfdfd" /><path d="M-13-6h26M-13 0h26M-13 6h26" stroke="#ddb9b9" /><path d="M13-19L-2 16" stroke="#8996a1" stroke-width="3" /></g>
        <use href="#i-pdf" x="1311" y="1757" />
        <use href="#i-chrome" x="1355" y="1757" />
        <g transform="translate(1397 1757)"><rect x="-15" y="-15" width="30" height="30" rx="7" fill="#fff" /><circle r="13.500" fill="#4776ba" /><path d="M6-5v-3H-6L1 0-6 8H6V5" fill="none" stroke="#fff" stroke-width="2.200" /></g>
        <use href="#i-git" x="1439" y="1757" />
        <g transform="translate(1483 1757)"><rect x="-15" y="-15" width="30" height="30" rx="7" fill="#fff" /><path d="M0-12L13 2Q12 6 5 5L8 10 0 12-7 9-4 5Q-13 6-13 2z" fill="#1b1b1b" /><path d="M0-9l5 5-3 2-2-2-3 2-2-2z" fill="#e4e8ee" /></g>
        <g transform="translate(1525 1757)"><ellipse cy="1" rx="15" ry="10" fill="none" stroke="#e88330" stroke-width="2.800" /><path d="M-12-14h8L13 14H5z" fill="#111" /><path d="M12-14L-12 14" stroke="#222" stroke-width="2" /></g>
        <g transform="translate(1567 1757)"><rect x="-15" y="-15" width="30" height="30" rx="7" fill="#d4d2d0" /><rect x="-9" y="-12" width="18" height="25" rx="3" fill="#333" /><rect x="-6" y="-9" width="12" height="5" fill="#111" /><g v-for="i in 9" :key="i"><circle :cx="-4.500 + ((i - 1) % 3) * 4.500" :cy="-.5 + Math.floor((i - 1) / 3) * 4.500" r="1.600" :fill="i % 3 ? '#e6e6e6' : '#f29a37'" /></g></g>
        <use href="#i-tex" x="1611" y="1757" />
        <use href="#i-mat" x="1653" y="1757" />
        <path d="M1685 1740v42" stroke="#6f3f35" stroke-width="2" />
        <g transform="translate(1715 1755)"><path d="M-14-16H5l10 12v19h-29z" fill="#e9edf2" stroke="#c2c8cf" /><path d="M-9-8v20M-4-8v20M1-8v20" stroke="#b9c3cf" stroke-width="2" /><text x="2" y="13" font-size="6" text-anchor="middle" fill="#777">XLS</text></g>
        <g transform="translate(1759 1756)"><path d="M-13-16H3l10 11v23h-26z" fill="#fbfbfb" stroke="#ccc" /><rect x="-6" y="-6" width="14" height="10" fill="#5a86c4" /><rect x="0" y="0" width="8" height="7" fill="#23272c" /><text y="15" font-size="6.500" text-anchor="middle" fill="#777">PNG</text></g>
        <g transform="translate(2143 1757)"><circle r="19" fill="#4a7fb8" /><rect x="-12" y="-9" width="24" height="19" fill="#eef3fa" /><path d="M-12-4h24M-12 1h24M-12 6h24M-6-9v19M0-9v19M6-9v19" stroke="#5f84c0" stroke-width="1.500" /><path d="M-10-19v17M-19-12H-2" stroke="#c31f3c" stroke-width="5" /><rect x="1" y="2" width="18" height="17" fill="#b92740" /><path d="M4 8h12M4 13h12" stroke="#fff" stroke-width="3" stroke-dasharray="3 1.500" /></g>

        <g v-for="t in thumbs" :key="t.x" :transform="`translate(${t.x} ${1757 - (t.h ?? 20) / 2})`">
          <rect x="-18" y="0" width="36" :height="t.h" fill="#fbfbfb" stroke="#d8d3d2" stroke-width=".7" />
          <g v-if="t.k === 'list'"><path d="M-17 2h34" stroke="#ccc" stroke-width="2" /><path d="M-15 12.500h30" stroke="#c9ced4" stroke-width="16" stroke-dasharray="6 3" opacity=".35" /></g>
          <g v-else-if="t.k === 'text'"><path v-for="i in Math.floor((t.h ?? 20) / 3) - 1" :key="i" :d="`M-14 ${i * 3 + 1}h${i % 4 ? 28 : 14}`" :stroke="i === 4 ? '#d9908c' : '#b6b7ba'" stroke-width="1" /></g>
          <g v-else-if="t.k === 'slide'"><path d="M-16 2v12" stroke="#333" stroke-width="2" stroke-dasharray="3 2" /><path d="M-10 5h22M-10 9h16" stroke="#c9c9cc" /></g>
          <g v-else-if="t.k === 'dots'"><circle v-for="i in 3" :key="i" :cx="-18 + i * 8" cy="7" r="3" fill="#7d87b5" /><circle v-for="i in 3" :key="'b' + i" :cx="-18 + i * 8" cy="15" r="2.500" fill="#e8b9a8" /></g>
          <g v-else-if="t.k === 'brain'"><path d="M-18 1h36" stroke="#20304f" stroke-width="2" /><path d="M-14 6h15M-14 10h13M-14 14h15" stroke="#888" /><rect x="2" y="7" width="15" height="13" fill="#1c2438" /></g>
          <g v-else-if="t.k === 'warm'"><rect v-for="i in 3" :key="i" :x="-27 + i * 12" y="5" width="6" height="9" :fill="['#e98d25', '#c7401e', '#3b1b12'][i - 1]" /></g>
          <g v-else-if="t.k === 'sheet'"><path d="M-11 2v20M-5 2v20M1 2v20" stroke="#a9b4cb" stroke-width="4" /></g>
          <g v-else-if="t.k === 'dark'"><rect x="-18" width="36" height="5" fill="#23262c" /><path d="M-14 9h10M-14 14h12" stroke="#bbb" /><rect x="-2" y="12" width="14" height="3" fill="#3f83ee" /></g>
          <g v-else-if="t.k === 'cols'"><path d="M-8 2v22M8 2v14" stroke="#333" stroke-width="2" /><path d="M-5 5h11M-5 9h11M-5 13h11" stroke="#8a90a0" /></g>
          <g v-else-if="t.k === 'green'"><rect x="-18" y="1" width="36" height="8" fill="#54bd95" /><rect x="-10" y="0" width="20" height="7" fill="#16301e" /><path d="M-8 14h16" stroke="#54bd95" /></g>
          <g v-else-if="t.k === 'shot'"><rect x="-13" y="3" width="26" height="16" fill="#dfe6ee" stroke="#3f5c80" /><path d="M-10 8h20M-10 13h14" stroke="#8ea6c4" stroke-width="2" /></g>
          <g v-else-if="t.k === 'code'"><path d="M-18 2h36" stroke="#2d5080" stroke-width="3" /><path d="M-13 7h20M-13 11h24M-13 15h16" stroke="#e0a2a0" /><path d="M-16 4v18" stroke="#8aa0bd" stroke-width="2" /></g>
          <use :href="'#i-' + t.b" :transform="`translate(11 ${(t.h ?? 20) / 2 + 11}) scale(.4)`" />
        </g>
        <g transform="translate(2826 1757)"><path d="M-13-12h26L9 16H-9z" fill="#e4e6e6" stroke="#c2c5c5" /><ellipse cy="-13" rx="13" ry="4.500" fill="#6a6d6c" /><path d="M-9-14l5-3 4 3 5-4 4 4" stroke="#fafafa" stroke-width="2.500" fill="none" /><path d="M-5-7l2 20M4-7L3 13" stroke="#c9cccc" stroke-width="1.500" /></g>
        <circle v-for="x in running" :key="x" :cx="x" cy="1783" r="3" fill="#4b4444" />
      </svg>
    </div>
  </div>
</template>

<style scoped>
.desk { position: relative; width: 2880px; height: 1800px; overflow: hidden; background: #c6c9c8; font-family: "Liberation Sans", Arial, sans-serif; font-size: 24px; color: #000; }
.wall { position: absolute; inset: 0; background: linear-gradient(#55718f 0 60px, #8b8e8e 60px 1726px, #b4b6b6 1732px, #dfe2e1 1792px); }
.ghost { position: absolute; left: -14px; top: 1733px; font-family: Inter, sans-serif; font-size: 29px; color: #8d908f; }
.sheet { position: absolute; left: 1938px; right: 0; top: 1726px; bottom: 0; border-left: 2px solid #999; background: linear-gradient(#bfc0c0, #e9e9e9); }
.photo { position: absolute; left: 1596px; top: 1726px; width: 240px; height: 74px; background: repeating-linear-gradient(100deg, #2a1513 0 4px, #6b2d22 6px 8px, #43201b 10px 13px); }
.redtext { position: absolute; right: -10px; top: 1722px; font: italic bold 27px "Liberation Serif", serif; color: #c83a28; white-space: nowrap; }
.menubar { position: absolute; display: block; left: 0; top: 0; width: 2880px; height: 49px; background: linear-gradient(90deg, #5c7997, #58748f 50%, #506f90); border-bottom: 1px solid #3d4f62; }
.bt { font-family: Inter, "Open Sans", sans-serif; font-size: 25.500px; font-weight: 500; }
.bt.bold { font-weight: 800; }
.win { position: absolute; display: flex; flex-direction: column; overflow: hidden; border-radius: 20px; background: #fff7ec; box-shadow: 0 0 1px 1px rgba(0, 0, 0, .28), 0 16px 44px rgba(0, 0, 0, .32); }
.measure { box-shadow: 0 0 1px 1px rgba(0, 0, 0, .2), 0 24px 56px rgba(0, 0, 0, .4); }
.graph, .measure, .triangles { background: #fff; }
.titlebar { flex: none; display: block; box-sizing: content-box; height: 56px; background: #e8e8e8; border-bottom: 1px solid #cacaca; box-shadow: inset 0 2px #f6f6f6; }
.measure .titlebar, .triangles .titlebar, .pipeline .titlebar { background: #e8e9eb; }
.titlebar text { font-family: Inter, sans-serif; font-size: 26px; font-weight: 700; fill: #a9a9aa; }
.menus { flex: none; display: flex; align-items: center; gap: 13.700px; height: 40px; padding-left: 10px; background: #f4f4f4; border-bottom: 2px solid #979797; font-size: 23.500px; }
.menus span { position: relative; top: -1px; }
.tools { flex: none; display: flex; align-items: center; height: 53px; padding-left: 5px; background: #f3f3f3; border-bottom: 2px solid #979797; }
.tools svg { flex: none; display: block; }
.sep { flex: none; width: 1px; height: 44px; margin: 0 4.500px; background: #b4b4b4; }
.pipebody { display: flex; flex-direction: column; gap: 10px; padding: 10px; }
.pipebody div { background: #4279c2; width: 610px; }
.b1 { height: 96px; }
.b2 { height: 240px; }
.pipebody .b3 { height: 768px; background: #8a7560; }
.anabody { display: flex; flex-direction: column; gap: 11px; flex: 1; padding: 10px 30px 0 10px; }
.orangebox { height: 1403px; box-sizing: border-box; padding: 6px 10px 6px 7px; background: #c48445; }
.orangebox div { height: 100%; box-sizing: border-box; background: #fff; border: 2px solid #a79a8b; }
.notes { flex: 1; padding: 0 10px 0 6px; background: #447fc6; }
.notes p { margin: 0; height: 49px; line-height: 33px; font-size: 23.500px; }
.notes div { height: 60px; box-sizing: border-box; padding-left: 8px; line-height: 39px; background: #f4f4f4; border: 2px solid #979797; font-size: 23.500px; }
.graphbody { display: flex; align-items: flex-start; padding: 132px 0 0 130px; flex: 1; background: linear-gradient(#fff 92%, #e9e9e9); }
.graphbody canvas { width: 1345px; height: 1345px; image-rendering: pixelated; flex: none; }
.cbar { flex: none; margin: -10px 0 0 33px; }
.plot { display: block; flex: none; }
.tick { font-size: 23.500px; fill: #262626; }
.big { font-size: 47.800px; }
.panels { display: flex; flex-direction: column; gap: 10px; padding: 9px 0 0 10px; }
.panel { flex: none; width: 600px; background: #b2b2b2; }
.panel h4 { margin: 0; height: 34px; padding-left: 6px; line-height: 33px; font-weight: 400; font-size: 23.500px; }
.row { display: flex; align-items: center; height: 42px; padding-left: 6px; }
.it { flex: none; box-sizing: border-box; height: 42px; display: flex; align-items: center; white-space: nowrap; }
.check span { margin: 1px 0 0 6px; }
.check svg { flex: none; }
.label { padding-top: 1px; }
.label sub { font-size: 22px; position: relative; top: 6px; vertical-align: baseline; }
.field { justify-content: flex-end; padding: 2px 9px 0; background: #fff; border: 2px solid #979797; }
.field.left { justify-content: flex-start; padding-left: 8px; }
.color { justify-content: center; padding-top: 2px; border: 2px solid #979797; border-radius: 10px; }
.drop { justify-content: space-between; padding: 2px 13px 0 9px; background: #f4f4f4; border: 2px solid #979797; border-radius: 10px; }
.tri { border: 8px solid transparent; border-top: 14px solid #000; border-bottom: 0; }
.slider svg { display: block; overflow: visible; }
.dock { position: absolute; left: 26px; top: 1732px; width: 2827px; height: 58px; border-radius: 12px; background: linear-gradient(90deg, #dcdcdf 0, #d8d9db 900px, #cfd0d2 1450px, #c6b5b1 1530px, #a57468 1585px, #a57468 1740px, #bb938a 1810px, #dccfcc 1890px, #e6d6d2 1980px, #edd0cb 2110px, #ecd0cb 2300px, #ecdedc 2520px, #ede2e0 2827px); box-shadow: inset 0 1px rgba(255, 255, 255, .5), 0 0 2px 1px rgba(0, 0, 0, .22); }
.dock svg { display: block; overflow: visible; }
.tex { font: 12px "Liberation Serif", serif; fill: #fff; }
.serif { font-family: "Liberation Serif", serif; }
.mono { font-family: "Liberation Mono", monospace; }
</style>

<style>
body { margin: 0; overflow: hidden; }
</style>
